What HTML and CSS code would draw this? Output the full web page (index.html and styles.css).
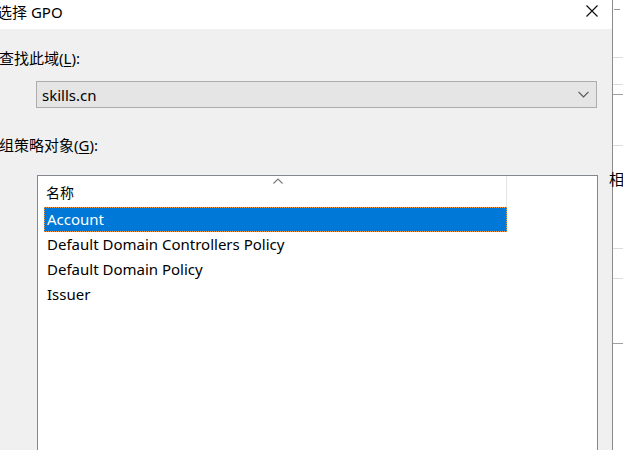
FILE: index.html
```html
<!DOCTYPE html>
<html>
<head>
<meta charset="utf-8">
<link rel="stylesheet" href="styles.css">
</head>
<body>
<div class="screen">
  <div class="dialog">
    <div class="titlebar">
      <span class="title">选择 GPO</span>
      <svg class="close" width="12" height="12" viewBox="0 0 12 12"><path d="M0.5 0.5 L11.5 11.5 M11.5 0.5 L0.5 11.5" stroke="#111" stroke-width="1.2" fill="none"/></svg>
    </div>
    <div class="body">
      <div class="label l1">查找此域(<u>L</u>):</div>
      <div class="combo">
        <span>skills.cn</span>
        <svg width="11" height="7" viewBox="0 0 11 7"><path d="M0.5 0.8 L5.5 5.8 L10.5 0.8" stroke="#555" stroke-width="1.2" fill="none"/></svg>
      </div>
      <div class="label l2">组策略对象(<u>G</u>):</div>
      <div class="listbox">
        <div class="header">
          <div class="col">名称
            <svg class="sort" width="10" height="6" viewBox="0 0 10 6"><path d="M0.5 5.5 L5 1 L9.5 5.5" stroke="#777" stroke-width="1.1" fill="none"/></svg>
          </div>
        </div>
        <div class="rows">
          <div class="row selected">Account</div>
          <div class="row">Default Domain Controllers Policy</div>
          <div class="row">Default Domain Policy</div>
          <div class="row">Issuer</div>
        </div>
      </div>
    </div>
  </div>
  <div class="behind">
    <div class="tick"></div>
    <div class="hl h1"></div>
    <div class="hl h2"></div>
    <div class="hl h3"></div>
    <div class="hl h4"></div>
    <div class="ch">相</div>
    <div class="hl h5"></div>
    <div class="hl h6"></div>
    <div class="hl h7"></div>
  </div>
</div>
</body>
</html>
```
FILE: styles.css
```css
* { box-sizing: border-box; }
html, body { margin: 0; padding: 0; background: #fff; overflow: hidden; }
body {
  width: 623px; height: 450px;
  font-family: "Noto Sans", "Noto Sans CJK SC", sans-serif;
  font-size: 15px; color: #000;
}
.screen { display: flex; width: 623px; height: 450px; }
.dialog {
  width: 613px; flex: none; height: 450px;
  border-right: 1px solid #8c8c8c;
  background: #f0f0f0;
  display: flex; flex-direction: column;
}
.titlebar {
  height: 29px; background: #fff; flex: none;
  display: flex; align-items: flex-start; justify-content: space-between;
  padding: 0 14px 0 0;
}
.title { margin-left: -3px; font-size: 15px; line-height: 22px; margin-top: 1px; }
.close { display: block; margin-top: 5px; }
.body { flex: 1; display: flex; flex-direction: column; min-height: 0; }
.label { line-height: 20px; margin-left: -1px; }
.label u { text-decoration: underline; text-underline-offset: 2px; }
.l1 { margin-top: 19px; }
.combo {
  margin: 13px 15px 0 36px; height: 27px;
  background: #e5e5e5; border: 1px solid #adadad;
  display: flex; align-items: center; justify-content: space-between;
  padding: 0 7px 0 5px;
}
.l2 { margin-top: 27px; }
.listbox {
  margin: 20px 14px 0 37px; flex: 1;
  background: #fff; border: 1px solid #828790; border-bottom: none;
  display: flex; flex-direction: column; padding: 0 6px;
}
.header { height: 31px; display: flex; flex: none; }
.col {
  width: 463px; border-right: 1px solid #e5e5e5; position: relative;
  padding-left: 2px; padding-top: 2px; line-height: 29px; font-size: 14px;
}
.sort { position: absolute; left: 229px; top: 2px; }
.rows { display: flex; flex-direction: column; }
.row { height: 25px; line-height: 25px; width: 463px; padding-left: 3px; }
.row.selected {
  background: #0078d7; color: #fff;
  outline: 1px dotted #f09a4a; outline-offset: -1px;
}
.behind { flex: 1; position: relative; }
.tick { position: absolute; left: 1px; top: 9px; width: 6px; height: 1px; background: #999; }
.hl { position: absolute; left: 0; right: 0; height: 1px; background: #dcdcdc; }
.h1 { top: 57px; }
.h2 { top: 84px; }
.h3 { top: 94px; background: #a0a0a0; }
.h4 { top: 145px; }
.ch { position: absolute; left: 0; top: 168px; font-size: 15px; line-height: 22px; margin-left: -4px; }
.h5 { top: 248px; }
.h6 { top: 278px; }
.h7 { top: 343px; background: #a0a0a0; }
```
